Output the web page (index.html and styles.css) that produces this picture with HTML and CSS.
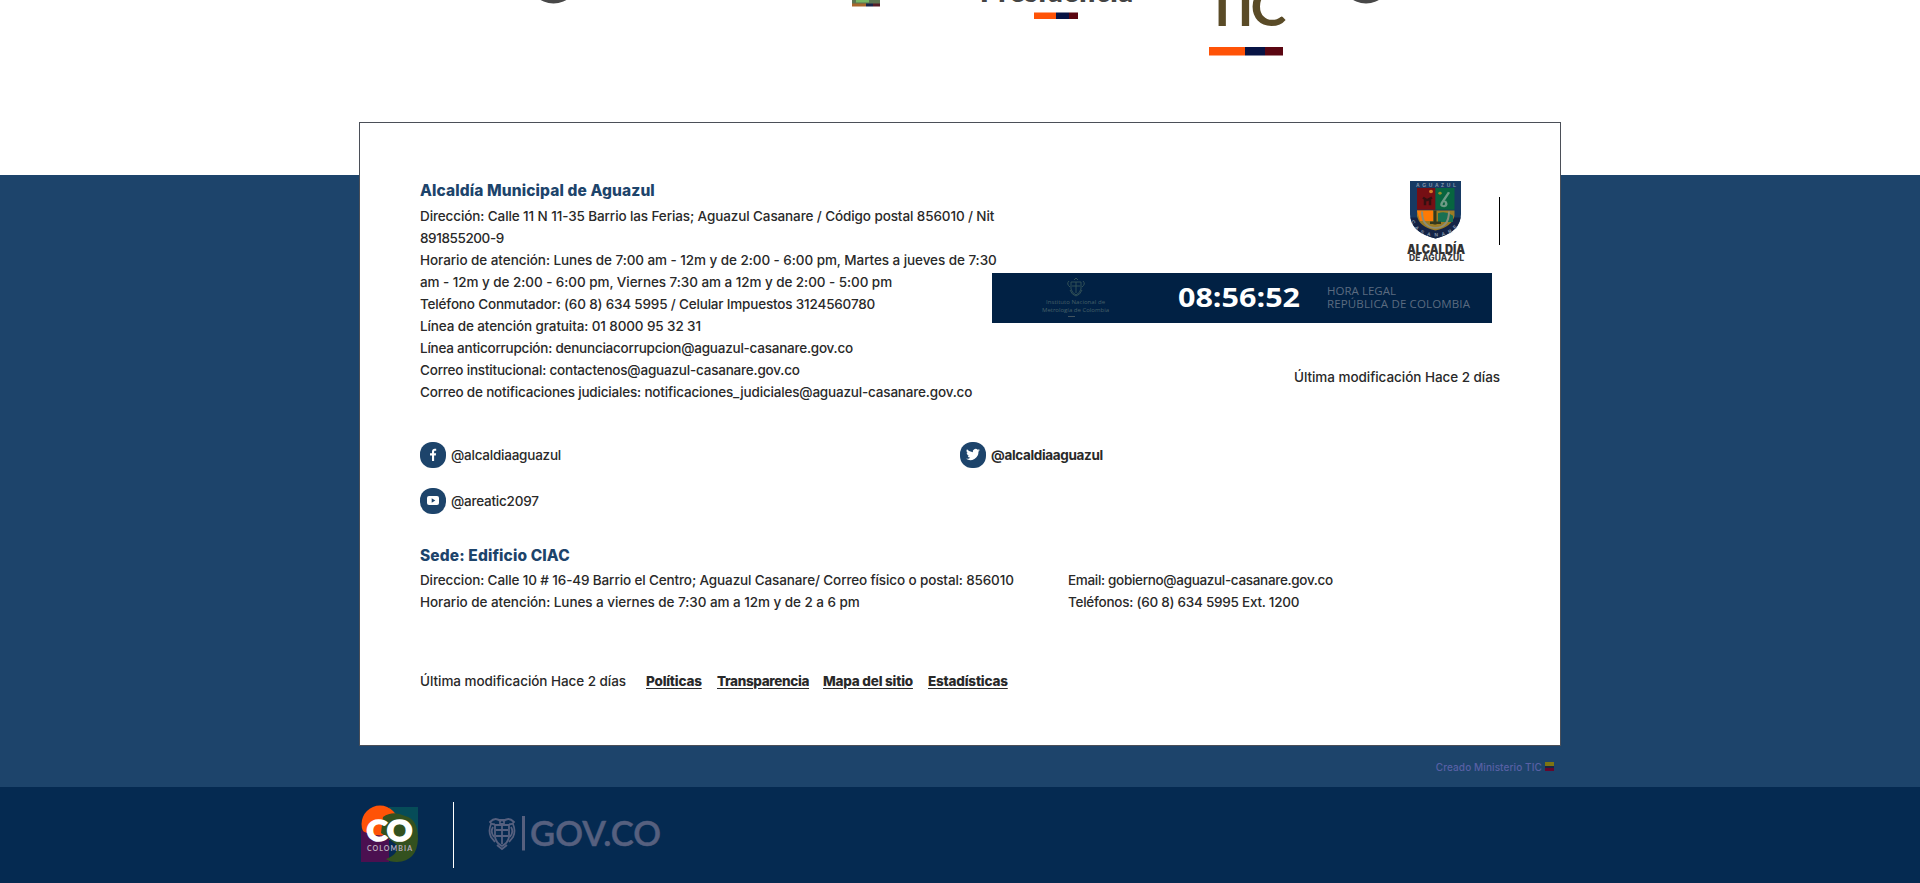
FILE: index.html
```html
<!DOCTYPE html>
<html lang="es">
<head>
<meta charset="utf-8">
<title>Alcaldía Municipal de Aguazul</title>
<link rel="stylesheet" href="styles.css">
</head>
<body>
<header class="partners">
  <svg class="partners-strip" viewBox="0 0 1920 60" width="1920" height="60">
    <circle cx="553.5" cy="-22" r="25.5" fill="#484848"/>
    <circle cx="1366" cy="-22" r="25.5" fill="#484848"/>
    <rect x="852" y="0" width="28" height="4" fill="#5b7350"/>
    <rect x="856" y="0" width="13" height="2.5" fill="#77b864"/>
    <rect x="852" y="3.500" width="14" height="3" fill="#a8662c"/>
    <rect x="866" y="3.500" width="7" height="3" fill="#17234a"/>
    <rect x="873" y="3.500" width="7" height="3" fill="#561d28"/>
    <text class="presidencia" x="980" y="2" textLength="153">Presidencia</text>
    <rect x="1034" y="12.500" width="22" height="6.500" fill="#ff5307"/>
    <rect x="1056" y="12.500" width="13" height="6.500" fill="#071344"/>
    <rect x="1069" y="12.500" width="9" height="6.500" fill="#5b0611"/>
    <text class="tic" x="1206 1237.500 1250.500" y="25.500">TIC</text>
    <rect x="1209" y="47" width="36" height="8.500" fill="#ff5307"/>
    <rect x="1245" y="47" width="20" height="8.500" fill="#071344"/>
    <rect x="1265" y="47" width="18" height="8.500" fill="#5b0611"/>
  </svg>
</header>
<footer class="footer">
  <section class="card">
    <div class="top">
      <div class="info">
        <h2 class="title title-main">Alcaldía Municipal de Aguazul</h2>
        <p class="l1">Dirección: Calle 11 N 11-35 Barrio las Ferias; Aguazul Casanare / Código postal 856010 / Nit</p>
        <p class="l2">891855200-9</p>
        <p class="l3">Horario de atención: Lunes de 7:00 am - 12m y de 2:00 - 6:00 pm, Martes a jueves de 7:30</p>
        <p class="l4">am - 12m y de 2:00 - 6:00 pm, Viernes 7:30 am a 12m y de 2:00 - 5:00 pm</p>
        <p class="l5">Teléfono Conmutador: (60 8) 634 5995 / Celular Impuestos 3124560780</p>
        <p class="l6">Línea de atención gratuita: 01 8000 95 32 31</p>
        <p class="l7">Línea anticorrupción: denunciacorrupcion@aguazul-casanare.gov.co</p>
        <p class="l8">Correo institucional: contactenos@aguazul-casanare.gov.co</p>
        <p class="l9">Correo de notificaciones judiciales: notificaciones_judiciales@aguazul-casanare.gov.co</p>
      </div>
      <div class="side">
        <div class="crest-row">
          <svg class="crest" viewBox="0 0 59 84" width="59" height="84">
            <g transform="scale(1 .87)">
            <path d="M3 0H54V38Q54 59 28.500 66Q3 59 3 38Z" fill="#173a63"/>
            <path d="M3.500 42Q6 60 28.500 66Q51 60 53.500 42" fill="#142345"/>
            <path d="M10 8H28.500V33H10Z" fill="#760f14"/>
            <path d="M28.500 8H47.500V33H28.500Z" fill="#07653f"/>
            <path d="M10 34H47.500V40Q45 53 28.500 57Q12 53 10 40Z" fill="#9c7c25"/>
            <path d="M10 34H26V46H13Z" fill="#ff7a05"/>
            <path d="M31 37Q39 34 46 40V47H31Z" fill="#197052"/>
            <path d="M15 35Q15 53 28.500 54Q42 53 42 35" fill="none" stroke="#8b8d78" stroke-width="2"/>
            <path d="M28 34V50M23 48H34" stroke="#34381c" stroke-width="3"/>
            <path d="M16 19L20 22L25 19M18 21V28M23 20V28" fill="none" stroke="#351011" stroke-width="2.500"/>
            <path d="M42 13L35 25Q33 29 37 29Q41 28 38 23" fill="none" stroke="#6e9a86" stroke-width="2.500"/>
            <circle cx="24" cy="12" r="2" fill="#d47b28"/><circle cx="33" cy="14" r="1.700" fill="#988d29"/>
            </g>
            <text class="crest-name" x="9" y="5.500" textLength="40">AGUAZUL</text>
            <path id="crest-curve" d="M4 40Q9 55 28.500 55.500Q48 55 53 40" fill="none"/>
            <text class="crest-name"><textPath href="#crest-curve" textLength="56">CASANARE</textPath></text>
            <text class="crest-big" x="0" y="72.500" textLength="58" lengthAdjust="spacingAndGlyphs">ALCALDÍA</text>
            <text class="crest-small" x="2" y="80" textLength="55" lengthAdjust="spacingAndGlyphs">DE AGUAZUL</text>
          </svg>
          <span class="crest-line"></span>
        </div>
        <div class="clock">
          <svg class="inm" viewBox="0 0 68 42" width="68" height="42">
            <g fill="none" stroke="#315057" stroke-width="1">
              <path d="M29 5H39V12Q38 16 34 18Q30 16 29 12ZM30 9H38M34 5V16M32 3L34 1L36 3M27 4Q24 7 28 10M41 4Q44 7 40 10M28 13Q30 18 34 19Q38 18 40 13"/>
            </g>
            <text x="4" y="27" textLength="59">Instituto Nacional de</text>
            <text x="0" y="34.500" textLength="67">Metrología de Colombia</text>
            <path d="M26 39.500H33" stroke="#42535f"/>
          </svg>
          <svg class="clock-text" viewBox="0 0 310 50" width="310" height="50">
            <text class="clock-time" x="0" y="34" textLength="122" lengthAdjust="spacingAndGlyphs">08:56:52</text>
            <text class="clock-label" x="149" y="21.500" textLength="69">HORA LEGAL</text>
            <text class="clock-label" x="149" y="34.500" textLength="143">REPÚBLICA DE COLOMBIA</text>
          </svg>
        </div>
        <p class="modified">Última modificación Hace 2 días</p>
      </div>
    </div>
    <div class="social">
      <a class="handle">
        <svg viewBox="0 0 26 26" width="26" height="26"><rect width="26" height="26" rx="12" fill="#1d446b"/><path d="M12 19V13.500H10V11.200H12V9.600C12 7.700 13.100 6.700 14.800 6.700L16.200 6.800V8.800H15.200C14.300 8.800 14.100 9.300 14.100 9.900V11.200H16.100L15.800 13.500H14.100V19Z" fill="#fff"/></svg>
        <span>@alcaldiaaguazul</span>
      </a>
      <a class="handle handle-strong">
        <svg viewBox="0 0 26 26" width="26" height="26"><rect width="26" height="26" rx="12" fill="#1d446b"/><path transform="translate(6 5.500) scale(.58)" d="M24 4.600a10 10 0 0 1-2.800.8 5 5 0 0 0 2.100-2.700 10 10 0 0 1-3.100 1.200 4.900 4.900 0 0 0-8.400 4.500A14 14 0 0 1 1.700 3.200a4.900 4.900 0 0 0 1.500 6.500 5 5 0 0 1-2.200-.6v.1a4.900 4.900 0 0 0 3.900 4.800 5 5 0 0 1-2.200.1 4.900 4.900 0 0 0 4.600 3.400A10 10 0 0 1 0 19.500 14 14 0 0 0 21.500 7.100 10 10 0 0 0 24 4.600Z" fill="#fff"/></svg>
        <span>@alcaldiaaguazul</span>
      </a>
      <a class="handle">
        <svg viewBox="0 0 26 26" width="26" height="26"><rect width="26" height="26" rx="12" fill="#1d446b"/><rect x="7" y="8" width="12" height="9" rx="2" fill="#fff"/><path d="M11.700 10.300V14.700L15.300 12.500Z" fill="#1d446b"/></svg>
        <span>@areatic2097</span>
      </a>
    </div>
    <h2 class="title title-branch">Sede: Edificio CIAC</h2>
    <div class="branch">
      <div>
        <p class="b1">Direccion: Calle 10 # 16-49 Barrio el Centro; Aguazul Casanare/ Correo físico o postal: 856010</p>
        <p class="b2">Horario de atención: Lunes a viernes de 7:30 am a 12m y de 2 a 6 pm</p>
      </div>
      <div>
        <p class="b3">Email: gobierno@aguazul-casanare.gov.co</p>
        <p class="b4">Teléfonos: (60 8) 634 5995 Ext. 1200</p>
      </div>
    </div>
    <nav class="links">
      <span class="links-date">Última modificación Hace 2 días</span>
      <span class="k1"><a>Políticas</a></span><span class="k2"><a>Transparencia</a></span><span class="k3"><a>Mapa del sitio</a></span><span class="k4"><a>Estadísticas</a></span>
    </nav>
  </section>
  <div class="credit"><span>Creado Ministerio TIC</span><i class="flag"></i></div>
  <div class="govbar">
    <svg viewBox="0 0 58 58" width="58" height="58">
      <path d="M0 28H28V57H0Z" fill="#4b1050"/>
      <path d="M28 2H57V30H28Z" fill="#064c58"/>
      <circle cx="19" cy="19" r="18.500" fill="#ff5307"/>
      <path d="M0 25Q10 32 28 30V55H0Z" fill="#4b1050"/>
      <path d="M22 12Q32 5 44 11Q57 14 57 34Q56 56 36 57Q28 57 25 54Q38 49 36 40L20 28Z" fill="#33511f"/>
      <text class="co" x="5.500" y="36" textLength="46" lengthAdjust="spacingAndGlyphs">CO</text>
      <text class="colombia" x="6" y="46" textLength="45">COLOMBIA</text>
    </svg>
    <span class="gov-divider"></span>
    <svg viewBox="0 0 174 40" width="174" height="40">
      <g fill="none" stroke="#56607f" stroke-width="1.800">
        <path d="M7 10H21V22Q20 28 14 31Q8 28 7 22ZM8 15H20M8 21H20M14 11V29"/>
        <path d="M13 7Q8 1 2 7Q4 10 7 9M15 7Q20 1 26 7Q24 10 21 9M3 9Q0 16 3 22L7 27M25 9Q28 16 25 22L21 27M5 12Q2 17 6 22M23 12Q26 17 22 22M9 30L14 34L19 30M12 5H16V9H12Z"/>
      </g>
      <rect x="34" y="1" width="3" height="34.500" fill="#56607f"/>
      <text class="gov" x="42" y="31" textLength="131" lengthAdjust="spacingAndGlyphs">GOV.CO</text>
    </svg>
  </div>
</footer>
</body>
</html>
```

FILE: styles.css
```css
* { box-sizing: border-box; margin: 0; padding: 0; }
body { width: 1920px; height: 883px; overflow: hidden; background: #fff; color: #292929; font: 500 13.5px/22px "Inter", "Liberation Sans", sans-serif; }
p, h2, span, a, text { white-space: nowrap; }
.partners { height: 175px; }
.partners-strip { display: block; }
.presidencia { font: 800 28px "Lato", sans-serif; fill: #444; }
.tic { font: 700 54px "Lato", sans-serif; fill: #5a4b27; }
.footer { display: flex; flex-direction: column; align-items: center; height: 708px; background: #1d446b; }
.card { width: 1202px; height: 624px; margin-top: -53px; padding: 56px 60px 0; background: #fff; border: 1px solid #4b4f58; flex: none; }
.top { display: flex; justify-content: space-between; height: 246px; }
.info { width: 560px; }
.title { font-size: 15.500px; font-weight: 800; color: #1d446b; line-height: 24px; letter-spacing: .12px; }
.title-main { height: 26px; }
.l1 { letter-spacing: -.107px; }
.l2 { letter-spacing: -.4px; }
.l3 { letter-spacing: -.063px; }
.l4 { letter-spacing: -.06px; }
.l5 { letter-spacing: -.18px; }
.l6 { letter-spacing: -.115px; }
.l7 { letter-spacing: -.23px; }
.l8 { letter-spacing: -.2px; }
.l9 { letter-spacing: -.18px; }
.side { display: flex; flex-direction: column; align-items: flex-end; width: 508px; padding-top: 2px; }
.crest-row { display: flex; gap: 33px; height: 92px; }
.crest-line { width: 1px; height: 48px; margin-top: 16px; background: #000; }
.crest-name { font: 700 5px "Liberation Sans", sans-serif; fill: #8798ac; }
.crest-big { font: 900 13px "Inter", sans-serif; fill: #333; }
.crest-small { font: 800 8.500px "Inter", sans-serif; fill: #3b3b3b; }
.clock { display: flex; align-items: center; width: 500px; height: 50px; margin-right: 8px; padding-left: 50px; background: #012144; }
.inm { font: 6px "Open Sans", sans-serif; fill: #466068; }
.clock-text { margin-left: 68px; }
.clock-time { font: 700 26px "Open Sans", sans-serif; fill: #fff; }
.clock-label { font: 400 11.500px "Open Sans", sans-serif; fill: #5b6b80; }
.modified { margin-top: 43px; letter-spacing: -.05px; }
.social { display: grid; grid-template-columns: 540px 1fr; row-gap: 20px; padding-top: 17px; height: 108px; grid-auto-rows: 26px; }
.handle { display: flex; gap: 5px; align-items: center; letter-spacing: -.23px; }
.handle span { margin-top: -1px; }
.handle-strong { font-weight: 700; letter-spacing: -.33px; }
.title-branch { margin-top: 11px; height: 25px; }
.branch { display: grid; grid-template-columns: 648px 1fr; }
.b1 { letter-spacing: -.125px; }
.b2 { letter-spacing: -.05px; }
.b3 { letter-spacing: -.32px; }
.b4 { letter-spacing: -.25px; }
.links { display: flex; margin-top: 57px; }
.links-date { width: 226px; letter-spacing: -.05px; }
.links a { font-weight: 800; text-decoration: underline; text-underline-offset: 2px; letter-spacing: -.2px; }
.k1 { width: 71px; }
.k2 { width: 106px; }
.links .k2 a { letter-spacing: -.34px; }
.k3 { width: 105px; }
.credit { display: flex; align-items: center; justify-content: flex-end; gap: 3px; width: 1202px; height: 41px; padding-right: 7px; font-size: 10px; letter-spacing: .1px; color: #5860a5; flex: none; }
.flag { width: 9px; height: 9px; background: linear-gradient(#7d7412 45%, #1b2443 45% 70%, #65072c 70%); }
.govbar { display: flex; align-items: flex-start; width: 1920px; height: 96px; padding: 18px 0 0 361px; background: #052a51; }
.gov-divider { width: 1px; height: 66px; margin: -3px 34px 0; background: #fff; }
.govbar svg:last-child { margin-top: 10px; }
.co { font: 900 28px "Lato", sans-serif; fill: #fff; stroke: #fff; stroke-width: 1.500px; }
.colombia { font: 700 7px "Lato", sans-serif; fill: #b7aabb; }
.gov { font: 600 34px "Lato", sans-serif; fill: #56607f; stroke: #56607f; stroke-width: .5px; }
```
